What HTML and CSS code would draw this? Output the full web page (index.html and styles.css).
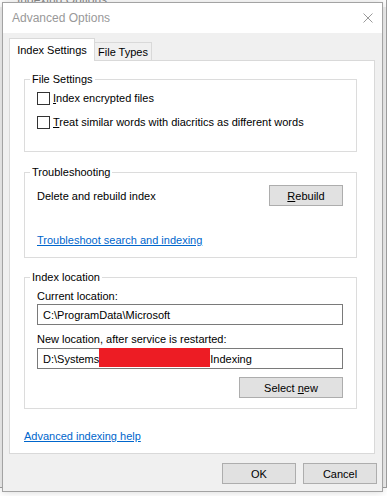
FILE: index.html
```html
<!DOCTYPE html>
<html>
<head>
<meta charset="utf-8">
<title>Advanced Options</title>
<link rel="stylesheet" href="styles.css">
</head>
<body>
<div class="behind">
  <div class="behind-title">Indexing Options</div>
</div>
<div class="dialog">
  <div class="titlebar">
    <span class="title">Advanced Options</span>
    <svg class="close" width="10" height="10" viewBox="0 0 10 10"><path d="M0.5 0.5L9.5 9.5M9.5 0.5L0.5 9.5" stroke="#9a9a9a" stroke-width="1" fill="none"/></svg>
  </div>
  <div class="body">
    <div class="tabs">
      <div class="tab active">Index Settings</div>
      <div class="tab inactive">File Types</div>
    </div>
    <div class="panel">
      <fieldset class="group g1">
        <legend>File Settings</legend>
        <label class="check"><span class="box"></span><span><u>I</u>ndex encrypted files</span></label>
        <label class="check second"><span class="box"></span><span><u>T</u>reat similar words with diacritics as different words</span></label>
      </fieldset>
      <fieldset class="group g2">
        <legend>Troubleshooting</legend>
        <div class="row">
          <span>Delete and rebuild index</span>
          <div class="btn"><span><u>R</u>ebuild</span></div>
        </div>
        <a class="link trouble" href="#">Troubleshoot search and indexing</a>
      </fieldset>
      <fieldset class="group g3">
        <legend>Index location</legend>
        <div class="label">Current location:</div>
        <div class="textbox">C:\ProgramData\Microsoft</div>
        <div class="label second">New location, after service is restarted:</div>
        <div class="textbox tb2"><span>D:\Systems</span><span class="redact"></span><span>Indexing</span></div>
        <div class="select-row"><div class="btn wide"><span>Select <u>n</u>ew</span></div></div>
      </fieldset>
      <a class="link help" href="#">Advanced indexing help</a>
    </div>
    <div class="actions">
      <div class="btn"><span>OK</span></div>
      <div class="btn"><span>Cancel</span></div>
    </div>
  </div>
</div>
</body>
</html>
```
FILE: styles.css
```css
* { box-sizing: border-box; }
html, body { margin: 0; padding: 0; }
body {
  width: 387px;
  height: 496px;
  overflow: hidden;
  position: relative;
  background: #ffffff;
  font-family: "Liberation Sans", Arial, sans-serif;
  font-size: 11px;
  line-height: 16px;
  color: #000;
}
.behind {
  position: absolute;
  left: -300px;
  top: -25px;
  width: 687px;
  height: 513px;
  background: #f0f0f0;
  border: 1px solid #a0a0a0;
}
.behind-title {
  height: 31px;
  background: #fff;
  padding: 16px 0 0 316px;
  color: #8a8a8a;
  font-size: 12px;
  line-height: 16px;
}
.dialog {
  position: absolute;
  left: 2px;
  top: 2px;
  width: 381px;
  height: 490px;
  border: 1px solid #a3a3a3;
  background: #f0f0f0;
  box-shadow: 0 0 8px rgba(0,0,0,0.16);
  display: flex;
  flex-direction: column;
}
.titlebar {
  height: 30px;
  flex: none;
  background: #fff;
  display: flex;
  align-items: center;
  justify-content: space-between;
  padding: 0 9px 0 9px;
}
.title {
  font-size: 12px;
  color: #999;
}
.close { display: block; }
.body {
  flex: 1;
  padding: 5px 7px 7px 6px;
  display: flex;
  flex-direction: column;
}
.tabs {
  display: flex;
  align-items: flex-end;
  height: 23px;
  margin-bottom: -1px;
  position: relative;
  z-index: 1;
}
.tab {
  border: 1px solid #d9d9d9;
  border-bottom: none;
  text-align: center;
  white-space: nowrap;
}
.tab.active {
  width: 86px;
  height: 23px;
  background: #fff;
  padding-top: 3px;
}
.tab.inactive {
  width: 57px;
  height: 18px;
  border-left: none;
  padding-top: 1px;
  margin-bottom: 1px;
  background: #f0f0f0;
}
.panel {
  background: #fff;
  border: 1px solid #d9d9d9;
  padding: 11px 0 9px 0;
  display: flex;
  flex-direction: column;
}
.group {
  margin: 0 17px 0 14px;
  border: 1px solid #dcdcdc;
  padding: 3px 13px 0 12px;
  min-width: 0;
  display: flex;
  flex-direction: column;
}
.group legend {
  padding: 0 2px;
  margin-left: -7px;
  line-height: 15px;
}
.g1 { padding-bottom: 21px; }
.g2 { margin-top: 13px; padding-top: 5px; padding-bottom: 9px; }
.g3 { margin-top: 12px; padding-top: 3px; padding-bottom: 10px; }
.check {
  display: flex;
  align-items: flex-start;
  height: 16px;
}
.check.second { margin-top: 8px; }
.box {
  width: 13px;
  height: 13px;
  border: 1px solid #333;
  background: #fff;
  margin-top: 2px;
  margin-right: 3px;
  flex: none;
}
.row {
  display: flex;
  align-items: center;
  justify-content: space-between;
  height: 21px;
}
.btn {
  width: 74px;
  height: 21px;
  border: 1px solid #adadad;
  background: #e1e1e1;
  display: flex;
  align-items: center;
  justify-content: center;
  white-space: nowrap;
}
.btn.wide { width: 104px; }
.link {
  color: #0066cc;
  text-decoration: underline;
  align-self: flex-start;
}
.trouble { margin-top: 26px; }
.help { margin: 19px 0 0 14px; }
.label { height: 16px; }
.label.second { margin-top: 6px; }
.textbox {
  height: 21px;
  border: 1px solid #7a7a7a;
  background: #fff;
  display: flex;
  align-items: center;
  padding: 0 5px;
  white-space: nowrap;
}
.tb2 { margin-top: 1px; }
.redact {
  width: 111px;
  height: 19px;
  background: #ed1c24;
  align-self: flex-start;
  margin-top: -1px;
  flex: none;
}
.select-row {
  display: flex;
  justify-content: flex-end;
  margin-top: 8px;
}
.actions {
  display: flex;
  justify-content: flex-end;
  gap: 7px;
  margin-top: 9px;
  margin-right: -2px;
}
```
